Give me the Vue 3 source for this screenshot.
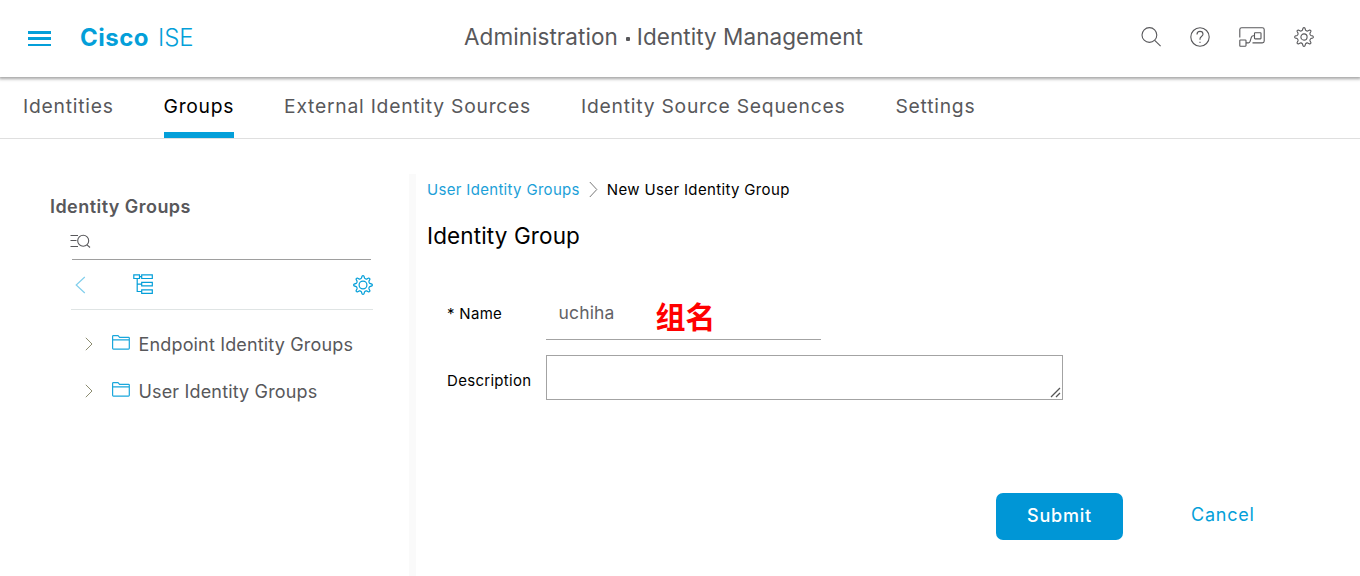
<script setup>
import { ref } from 'vue'

const tabs = [
  { label: 'Identities', key: 'identities' },
  { label: 'Groups', key: 'groups' },
  { label: 'External Identity Sources', key: 'external' },
  { label: 'Identity Source Sequences', key: 'sequences' },
  { label: 'Settings', key: 'settings' }
]
const activeTab = ref('groups')
const folders = [
  { label: 'Endpoint Identity Groups', key: 'endpoint' },
  { label: 'User Identity Groups', key: 'user' }
]
const name = ref('uchiha')
const description = ref('')

// Outline of an eight-toothed gear centred on (10, 10)
function gearPath(outer, inner) {
  const at = (r, deg) => {
    const a = (deg * Math.PI) / 180
    return `${(10 + r * Math.cos(a)).toFixed(2)} ${(10 + r * Math.sin(a)).toFixed(2)}`
  }
  let d = ''
  for (let i = 0; i < 8; i++) {
    const t = i * 45
    d += `${i ? 'L' : 'M'}${at(inner, t - 13)} L${at(outer - 0.5, t - 6)} Q${at(outer + 0.5, t)} ${at(outer - 0.5, t + 6)} L${at(inner, t + 13)} Q${at(inner - 0.8, t + 22.5)} ${at(inner, t + 32)} `
  }
  return d + 'Z'
}
const gear = gearPath(9.4, 7)
</script>

<template>
  <div class="page">
    <header class="header">
      <svg class="menu" width="23" height="16" viewBox="0 0 23 16">
        <rect width="23" height="3" /><rect y="6" width="23" height="3" /><rect y="13" width="23" height="2" />
      </svg>
      <div class="brand"><b>Cisco</b><span>ISE</span></div>
      <h1 class="title">Administration<i class="dot"></i>Identity Management</h1>
      <div class="tools">
        <svg width="20" height="20" viewBox="0 0 20 20" class="line">
          <circle cx="8.4" cy="8" r="7.4" /><path d="M13.7 13.3L19.6 19.2" />
        </svg>
        <svg width="20" height="20" viewBox="0 0 20 20" class="line">
          <circle cx="10" cy="10" r="9.2" />
          <path d="M7 7.4C7 5.5 8.3 4.4 10 4.4s3 1.1 3 2.8c0 2.2-3 2.3-3 4.5v1" /><path d="M10 14.8v1.2" />
        </svg>
        <svg width="26" height="20" viewBox="0 0 26 20" class="line">
          <path d="M.8 10.5V2.6Q.8.7 2.7.7H23.3Q25.2.7 25.2 2.6V14Q25.2 15.9 23.3 15.9H13.5" />
          <rect x=".8" y="13" width="6.2" height="6.2" rx=".6" />
          <rect x="15.5" y="5.7" width="6.5" height="6.2" rx=".6" />
          <path d="M7 15.9H9.3Q10.5 15.9 11 14.6L12.4 10.2Q12.9 8.8 14.2 8.8H15.5" />
        </svg>
        <svg width="20" height="20" viewBox="0 0 20 20" class="line">
          <path :d="gear" /><circle cx="10" cy="10" r="3.1" />
        </svg>
      </div>
    </header>

    <nav class="tabs">
      <a v-for="t in tabs" :key="t.key" :class="['tab', t.key, { active: t.key === activeTab }]">{{ t.label }}</a>
    </nav>

    <div class="body">
      <aside class="side">
        <h2 class="side-title">Identity Groups</h2>
        <div class="filter">
          <svg width="21" height="14" viewBox="0 0 21 14" class="line">
            <path d="M.5 1.5H8M.5 6.5H6.5M.5 12.5H8" /><circle cx="13.2" cy="6.7" r="5.5" /><path d="M17 10.8L20 13.5" />
          </svg>
        </div>
        <div class="toolbar">
          <svg class="back" width="11" height="18" viewBox="0 0 11 18"><path d="M9.8 1L1.2 9L9.8 17" /></svg>
          <svg class="hier" width="21" height="21" viewBox="0 0 21 21">
            <path d="M.8.8H6.5V4.5H.8ZM8.7.8H19.3V4.5H8.7ZM8.7 8.3H19.3V11.9H8.7ZM8.7 15.8H19.3V19.3H8.7ZM6.5 2.6H8.7M4.2 4.5V17.5H8.7M4.2 10.1H8.7" />
          </svg>
          <svg class="cog" width="20" height="20" viewBox="0 0 20 20"><path :d="gear" /><circle cx="10" cy="10" r="3.9" /></svg>
        </div>
        <ul class="tree">
          <li v-for="f in folders" :key="f.key">
            <svg class="chev" width="8" height="14" viewBox="0 0 8 14"><path d="M.8 .8L7 7L.8 13.2" /></svg>
            <svg class="folder" width="18" height="15" viewBox="0 0 18 15">
              <path d="M.6 4.7V1.4Q.6.6 1.4.6H6L7.6 2.3H16.5Q17.3 2.3 17.3 3.1V13.3Q17.3 14.1 16.5 14.1H1.4Q.6 14.1 .6 13.3ZM.6 4.8H17.3" />
            </svg>
            <span>{{ f.label }}</span>
          </li>
        </ul>
      </aside>

      <main class="main">
        <div class="crumbs">
          <a class="crumb-link">User Identity Groups</a>
          <svg width="9" height="17" viewBox="0 0 9 17"><path d="M.8 1L7.8 8.5L.8 16" /></svg>
          <span class="crumb-current">New User Identity Group</span>
        </div>
        <h2 class="main-title">Identity Group</h2>
        <div class="row name-row">
          <label>* Name</label>
          <div class="field">
            <input v-model="name" />
            <strong class="note">组名</strong>
          </div>
        </div>
        <div class="row desc-row">
          <label>Description</label>
          <div class="area">
            <textarea v-model="description"></textarea>
            <svg class="grip" width="11" height="11" viewBox="0 0 11 11"><path d="M1 10L10 1M6 10L10 6" /></svg>
          </div>
        </div>
        <div class="actions">
          <button class="submit">Submit</button>
          <a class="cancel">Cancel</a>
        </div>
      </main>
    </div>
  </div>
</template>

<style>
body { margin: 0; background: #fff; }
</style>

<style scoped>
* { box-sizing: border-box; }
.page { width: 1360px; height: 576px; overflow: hidden; display: flex; flex-direction: column; background: #fff; color: #58585b; font-family: Inter, "Liberation Sans", "Noto Sans CJK SC", sans-serif; white-space: nowrap; }
h1, h2, ul { margin: 0; padding: 0; }
svg { display: block; flex: none; fill: none; }
.header { height: 77px; flex: none; display: flex; align-items: center; box-shadow: 0 1px 3px 1px rgba(0, 0, 0, .36); }
.menu { margin-left: 28px; margin-top: 1px; fill: #049fd9; }
.brand { margin-left: 29px; margin-top: -2px; width: 384px; display: flex; gap: 9px; font-size: 24px; color: #049fd9; }
.brand b { font-weight: 700; letter-spacing: .5px; }
.brand span { font-weight: 300; letter-spacing: -.1px; }
.title { width: 677px; margin-top: -5px; font-size: 22.5px; font-weight: 400; letter-spacing: .05px; }
.dot { display: inline-block; width: 4px; height: 4px; margin: 0 7px 4px 8px; background: #58585b; border-radius: 1px; }
.tools { display: flex; align-items: center; gap: 29px; margin-top: -4px; }
.line { stroke: #58585b; stroke-width: 1.1; }
.tabs { height: 62px; flex: none; display: flex; gap: 50px; padding-left: 23px; border-bottom: 1px solid #dfdfdf; }
.tab { height: 61px; padding-top: 17px; font-size: 19.3px; line-height: 24px; letter-spacing: .76px; font-weight: 400; border-bottom: 6px solid transparent; }
.tab.active { color: #000; border-color: #049fd9; letter-spacing: .7px; }
.body { flex: 1; display: flex; padding-top: 35px; }
.side { width: 409px; padding: 21px 36px 0 50px; }
.side-title { font-size: 18px; line-height: 24px; font-weight: 600; letter-spacing: .45px; }
.filter { height: 41px; width: 299px; margin-left: 22px; padding-top: 15px; border-bottom: 1px solid #9e9e9e; }
.filter svg { margin-left: -2px; }
.toolbar { height: 50px; width: 302px; margin-left: 21px; padding: 0 .5px 0 4px; display: flex; align-items: center; border-bottom: 1px solid #dfe4e4; }
.toolbar svg { stroke: #049fd9; stroke-width: 1.2; }
.toolbar .back { stroke: #82cfec; }
.hier { margin-left: 47px; }
.cog { margin-left: auto; }
.tree { list-style: none; margin-top: 11px; }
.tree li { height: 47px; display: flex; align-items: center; font-size: 18px; letter-spacing: .16px; padding-left: 35px; }
.chev { margin-top: -1px; stroke: #8c8c70; stroke-width: 1; }
.folder { stroke: #1aa7dc; stroke-width: 1.2; margin: -4px 9px 0 18.5px; }
.main { flex: 1; padding-left: 11px; border-left: 7px solid #fafafa; }
.crumbs { display: flex; align-items: center; height: 18px; margin-top: 6px; gap: 9px; font-size: 15px; letter-spacing: .32px; color: #000; }
.crumbs svg { stroke: #777; stroke-width: 1; }
.crumb-link { color: #1c9fd8; }
.crumb-current { letter-spacing: .35px; }
.main-title { margin-top: 24px; font-size: 22.5px; line-height: 28px; font-weight: 400; letter-spacing: .12px; color: #000; }
.row { display: flex; padding-left: 20px; font-size: 15px; letter-spacing: .3px; color: #000; }
.row label { width: 99px; }
.name-row { margin-top: 40px; height: 50px; }
.name-row label { padding-top: 14px; }
.field { width: 275px; border-bottom: 1px solid #a3a3a3; display: flex; }
.field input { width: 109.5px; height: 32px; margin-top: 6px; border: 0; padding: 0 0 0 12.5px; outline: 0; background: none; font: 400 17.5px Inter, sans-serif; letter-spacing: .15px; color: #626266; }
.note { margin-top: 3px; font: 700 30px/44px "Noto Sans CJK SC", sans-serif; letter-spacing: 0; color: #f00; }
.desc-row { margin-top: 15px; height: 45px; align-items: center; }
.desc-row label { padding-top: 6px; }
.area { position: relative; width: 517px; height: 45px; }
.area textarea { display: block; width: 100%; height: 100%; border: 1px solid #a3a3a3; resize: none; outline: 0; background: #fff; }
.grip { position: absolute; right: 2px; bottom: 2px; stroke: #555; stroke-width: 1.3; }
.actions { display: flex; align-items: center; margin: 93px 0 0 569px; font-size: 18px; }
.submit { width: 127px; height: 47px; border: 0; border-radius: 7px; padding: 0 0 2px; background: #0096d6; color: #fff; font: 500 18px Inter, sans-serif; letter-spacing: .8px; }
.cancel { margin: -4px 0 0 68px; color: #049fd9; letter-spacing: .75px; }
</style>
